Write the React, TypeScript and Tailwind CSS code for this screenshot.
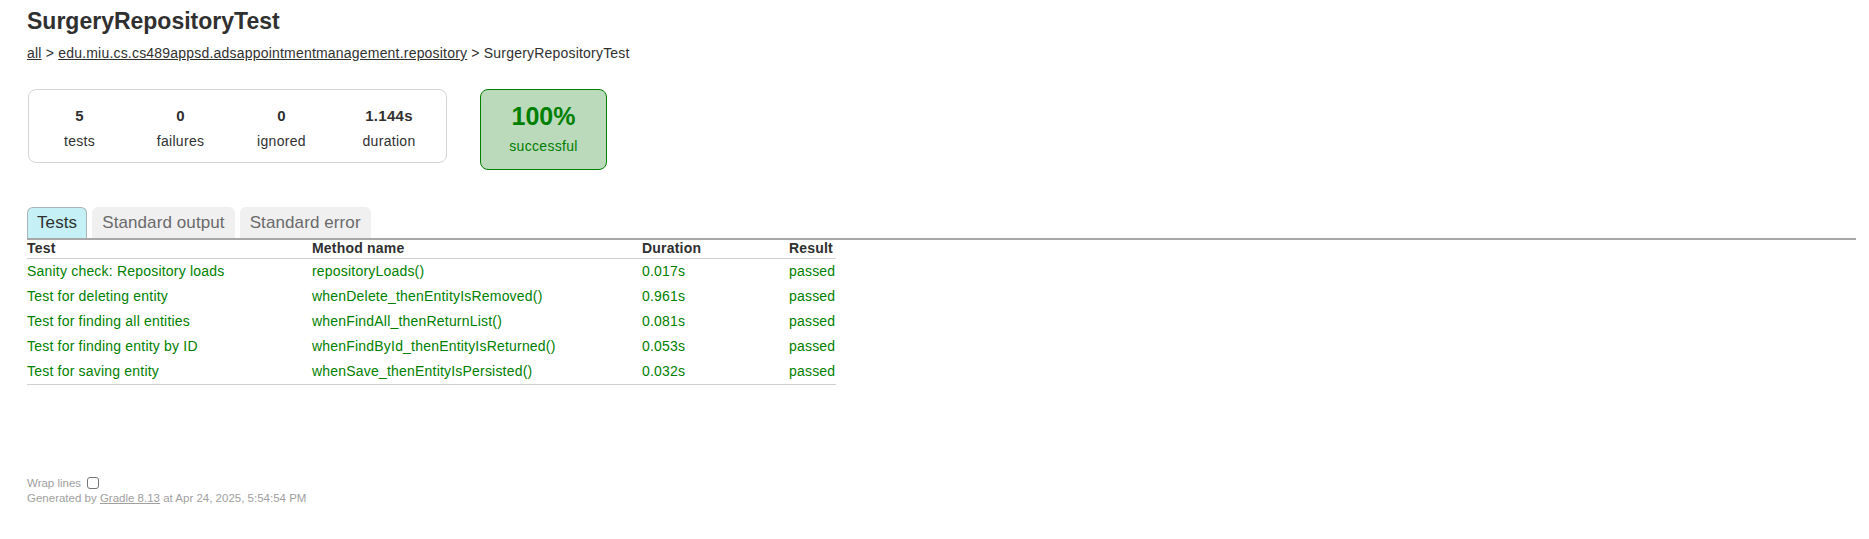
import { useState } from "react";

const rows = [
  { test: "Sanity check: Repository loads", method: "repositoryLoads()", duration: "0.017s", result: "passed" },
  { test: "Test for deleting entity", method: "whenDelete_thenEntityIsRemoved()", duration: "0.961s", result: "passed" },
  { test: "Test for finding all entities", method: "whenFindAll_thenReturnList()", duration: "0.081s", result: "passed" },
  { test: "Test for finding entity by ID", method: "whenFindById_thenEntityIsReturned()", duration: "0.053s", result: "passed" },
  { test: "Test for saving entity", method: "whenSave_thenEntityIsPersisted()", duration: "0.032s", result: "passed" },
];

const counters = [
  { value: "5", label: "tests", w: "w-[101px]" },
  { value: "0", label: "failures", w: "w-[101px]" },
  { value: "0", label: "ignored", w: "w-[101px]" },
  { value: "1.144s", label: "duration", w: "w-[114px]" },
];

const tabs = ["Tests", "Standard output", "Standard error"];

export default function App() {
  const [tab, setTab] = useState(0);
  const [wrap, setWrap] = useState(false);

  return (
    <div className="min-h-screen bg-white text-[#303030] font-['Liberation_Sans',Arial,sans-serif]">
      <div className="pl-[27px] pr-[13px] pt-[9px]">
        <h1 className="text-[23px] font-bold leading-[25px] whitespace-nowrap">SurgeryRepositoryTest</h1>
        <div className="mt-[12px] text-[14px] leading-[15px] tracking-[0.2px] whitespace-nowrap">
          <a href="#" className="underline">all</a> &gt;{" "}
          <a href="#" className="underline">edu.miu.cs.cs489appsd.adsappointmentmanagement.repository</a> &gt; SurgeryRepositoryTest
        </div>

        <div className="mt-[28px] flex items-start">
          <div className="ml-px flex rounded-[8px] border border-[#d4d4d4] pt-[18px] pb-[13px]">
            {counters.map((c) => (
              <div key={c.label} className={`${c.w} flex flex-col items-center`}>
                <div className="text-[15px] font-bold leading-[16px] tracking-[0.3px]">{c.value}</div>
                <div className="mt-[10px] text-[14px] leading-[15px] tracking-[0.3px]">{c.label}</div>
              </div>
            ))}
          </div>
          <div className="ml-[33px] flex h-[81px] w-[127px] flex-col items-center rounded-[8px] border border-[#008000] bg-[#bbd9bb] pt-[12px] text-[#008000]">
            <div className="text-[25px] font-bold leading-[29px]">100%</div>
            <div className="mt-[8px] text-[14px] leading-[15px] tracking-[0.3px]">successful</div>
          </div>
        </div>

        <div className="mt-[37px] flex gap-[5px] border-b-[2px] border-[#a8a8a8]">
          {tabs.map((t, i) => (
            <button
              key={t}
              onClick={() => setTab(i)}
              className={
                i === tab
                  ? "h-[31px] rounded-t-[6px] border border-b-0 border-[#a8b4b8] bg-[#c5f0f5] px-[9px] text-[17px] leading-[18px] tracking-[0.1px] text-[#303030]"
                  : "h-[31px] rounded-t-[6px] bg-[#f0f0f0] px-[10px] text-[17px] leading-[18px] tracking-[0.1px] text-[#6a6a6a]"
              }
            >
              {t}
            </button>
          ))}
        </div>

        {tab === 0 && (
          <table className="table-fixed border-collapse border-b border-[#d0d0d0] text-[14px] tracking-[0.2px]">
            <colgroup>
              <col className="w-[285px]" />
              <col className="w-[330px]" />
              <col className="w-[147px]" />
              <col className="w-[47px]" />
            </colgroup>
            <thead>
              <tr className="border-b border-[#d0d0d0] text-left">
                <th className="h-[18px] p-0 font-bold leading-[15px] whitespace-nowrap">Test</th>
                <th className="p-0 font-bold leading-[15px] whitespace-nowrap">Method name</th>
                <th className="p-0 font-bold leading-[15px] whitespace-nowrap">Duration</th>
                <th className="p-0 font-bold leading-[15px] whitespace-nowrap">Result</th>
              </tr>
            </thead>
            <tbody className="text-[#008000]">
              {rows.map((r) => (
                <tr key={r.method}>
                  <td className="py-[5px] leading-[15px] whitespace-nowrap">{r.test}</td>
                  <td className="py-[5px] leading-[15px] whitespace-nowrap">{r.method}</td>
                  <td className="py-[5px] leading-[15px] whitespace-nowrap">{r.duration}</td>
                  <td className="py-[5px] leading-[15px] whitespace-nowrap">{r.result}</td>
                </tr>
              ))}
            </tbody>
          </table>
        )}

        <div className="mt-[91px] text-[11.5px] leading-[15px] text-[#a0a0a0] whitespace-nowrap">
          <label className="flex items-center">
            Wrap lines
            <input
              type="checkbox"
              checked={wrap}
              onChange={(e) => setWrap(e.target.checked)}
              className="ml-[6px] h-[12px] w-[12px] appearance-none rounded-[3px] border border-[#767676] bg-white checked:bg-[#0075ff]"
            />
          </label>
          <div>
            Generated by <a href="#" className="text-[#a0a0a0] underline">Gradle 8.13</a> at Apr 24, 2025, 5:54:54 PM
          </div>
        </div>
      </div>
    </div>
  );
}
